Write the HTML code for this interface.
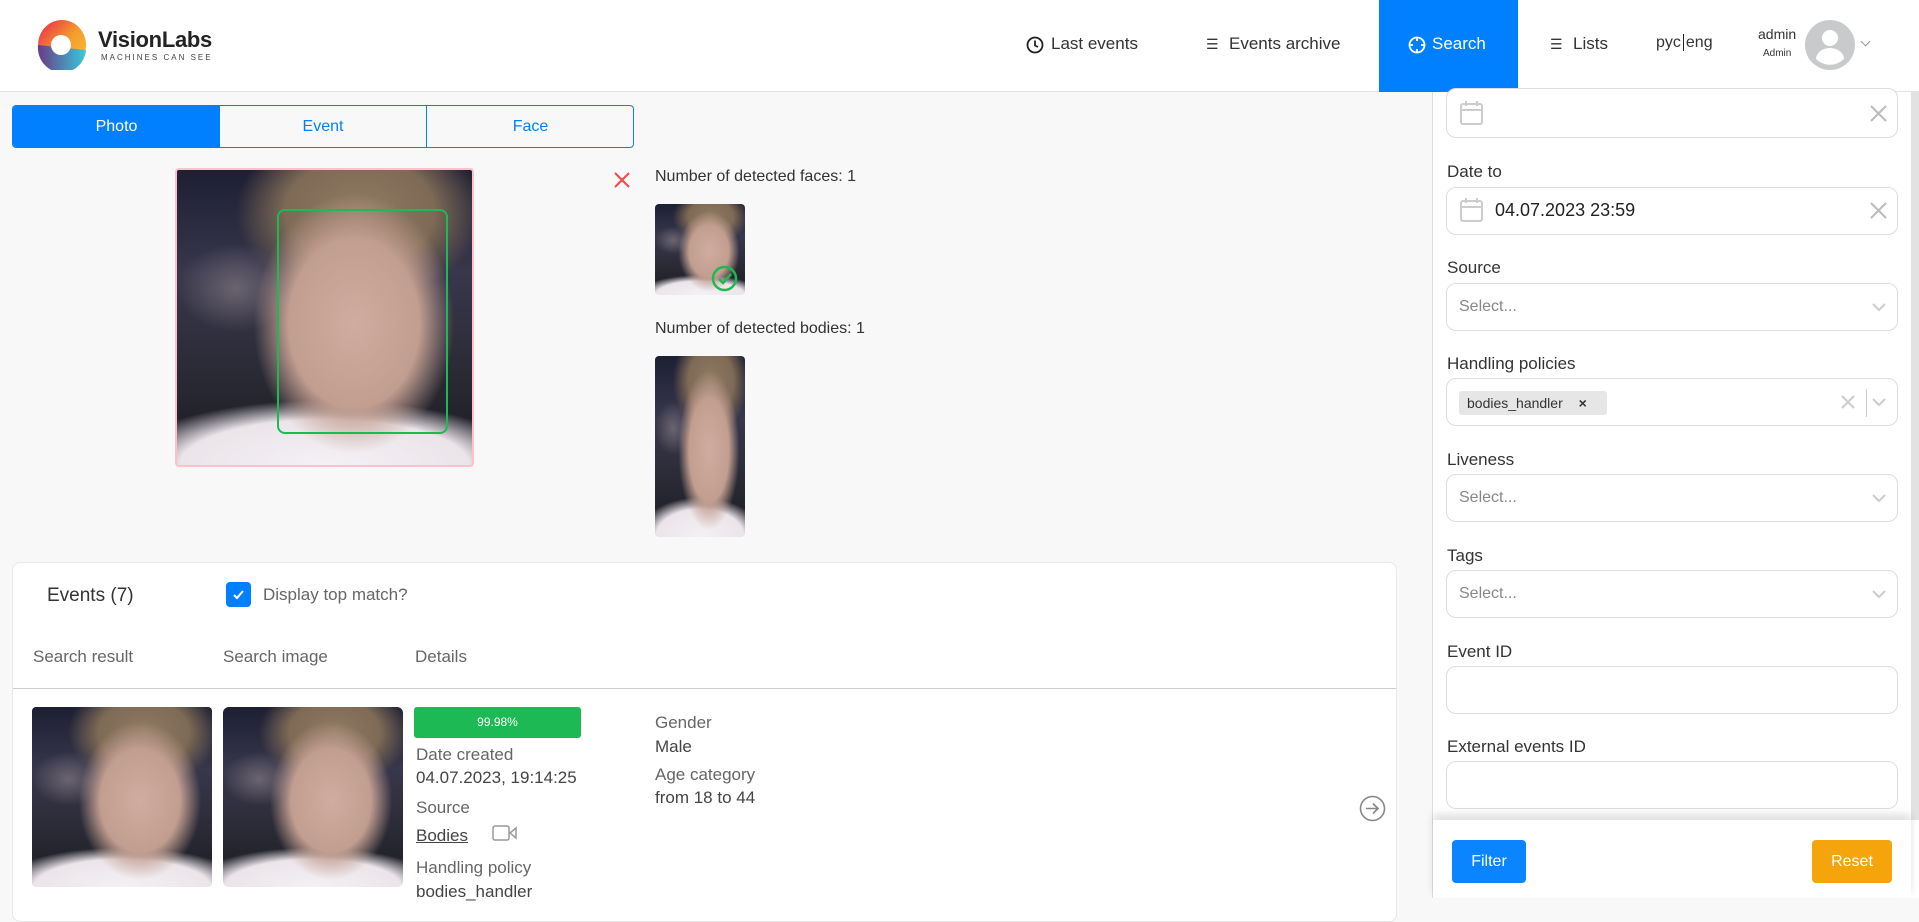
<!DOCTYPE html>
<html><head><meta charset="utf-8"><style>
*{box-sizing:border-box;margin:0;padding:0}
body{width:1919px;height:898px;overflow:hidden;background:#f8f8f8;font-family:"Liberation Sans",sans-serif;color:#333;position:relative}
.a{position:absolute}
.hdr{left:0;top:0;width:1919px;height:92px;background:#fff;border-bottom:1px solid #e3e3e3}
.nav{top:34px;font-size:17px;color:#333;white-space:nowrap}
.face{overflow:hidden;background:
radial-gradient(ellipse 34% 44% at 60% 52%,#cfac9f 0,#c29e90 65%,rgba(180,140,125,0) 100%),
radial-gradient(ellipse 42% 30% at 62% 14%,#8f7a63 0,#7e6a55 60%,rgba(0,0,0,0) 100%),
radial-gradient(ellipse 70% 22% at 50% 100%,#f4f0f4 0,#ebe5ea 70%,rgba(0,0,0,0) 100%),
radial-gradient(ellipse 20% 15% at 20% 40%,#6a6470 0,rgba(0,0,0,0) 100%),
linear-gradient(180deg,#1d1f33 0,#38374c 35%,#2a2a35 70%,#1a1a22 100%)}
.lbl{font-size:17px;color:#333;left:1447px}
.inp{left:1446px;width:452px;height:48px;border:1px solid #ddd;border-radius:10px;background:#fff}
.sel{font-size:16px;color:#888;position:absolute;left:12px;top:14px}
.chev{position:absolute;right:10px;top:15px}
.mut{font-size:17px;color:#666}
.val{font-size:17px;color:#444}
</style></head><body>
<div class="a hdr"></div>
<svg class="a" style="left:37px;top:20px" width="50" height="50" viewBox="0 0 50 50">
<defs><linearGradient id="g1" x1="0" y1="0" x2="1" y2="1"><stop offset="0" stop-color="#e8204f"/><stop offset=".5" stop-color="#f59a2d"/><stop offset="1" stop-color="#f9c62c"/></linearGradient>
<linearGradient id="g2" x1="0" y1="0" x2="1" y2="0"><stop offset="0" stop-color="#6a3b83"/><stop offset="1" stop-color="#3ac9dd"/></linearGradient></defs>
<ellipse cx="25" cy="25" rx="24" ry="25" fill="url(#g1)"/>
<path d="M1 25 A24 25 0 0 0 49 30 L30 28 Z" fill="url(#g2)"/>
<circle cx="24" cy="25" r="10" fill="#fff"/></svg>
<div class="a" style="left:98px;top:27px;font-size:22px;font-weight:bold;color:#222;letter-spacing:-.3px">VisionLabs</div>
<div class="a" style="left:101px;top:53px;font-size:8px;color:#444;letter-spacing:2px">MACHINES CAN SEE</div>
<svg class="a" style="left:1026px;top:36px" width="18" height="18" viewBox="0 0 18 18"><circle cx="9" cy="9" r="7.5" fill="none" stroke="#222" stroke-width="1.8"/><path d="M9 4.5V9.5L12 11" fill="none" stroke="#222" stroke-width="1.8"/></svg>
<div class="a nav" style="left:1051px">Last events</div>
<div class="a nav" style="left:1206px;font-size:14px;top:36px">☰</div>
<div class="a nav" style="left:1229px">Events archive</div>
<div class="a" style="left:1379px;top:0;width:139px;height:92px;background:#0080ff"></div>
<svg class="a" style="left:1408px;top:36px" width="18" height="18" viewBox="0 0 18 18"><circle cx="9" cy="9" r="7.5" fill="none" stroke="#fff" stroke-width="1.8"/><path d="M9 1v4M9 13v4M1 9h4M13 9h4" stroke="#fff" stroke-width="1.8"/></svg>
<div class="a nav" style="left:1432px;color:#fff">Search</div>
<div class="a nav" style="left:1550px;font-size:14px;top:36px">☰</div>
<div class="a nav" style="left:1573px">Lists</div>
<div class="a nav" style="left:1656px;font-size:16px">pyc<span style="border-left:1px solid #222;margin:0 2px"></span>eng</div>
<div class="a" style="left:1758px;top:26px;font-size:14px;color:#333">admin</div>
<div class="a" style="left:1763px;top:48px;font-size:10px;color:#333">Admin</div>
<svg class="a" style="left:1805px;top:20px" width="50" height="50" viewBox="0 0 50 50"><circle cx="25" cy="25" r="25" fill="#c9cacc"/><circle cx="25" cy="18" r="8" fill="#fff"/><path d="M11 39a14 11 0 0 1 28 0a20 20 0 0 1-28 0z" fill="#fff"/></svg>
<div class="a" style="left:1862px;top:38px;width:7px;height:7px;border-right:1px solid #999;border-bottom:1px solid #999;transform:rotate(45deg)"></div>

<div class="a" style="left:12px;top:105px;width:622px;height:43px;border:1px solid #0080ff;border-radius:4px;background:#f8f8f8;overflow:hidden;font-size:16px;color:#0080ff">
<div class="a" style="left:0;top:0;width:207px;height:41px;background:#0080ff;color:#fff;text-align:center;line-height:41px">Photo</div>
<div class="a" style="left:207px;top:0;width:207px;height:41px;border-right:1px solid #0080ff;text-align:center;line-height:41px">Event</div>
<div class="a" style="left:414px;top:0;width:207px;height:41px;text-align:center;line-height:41px">Face</div>
</div>
<div class="a face" style="left:175px;top:168px;width:299px;height:299px;border:2px solid #ffc0cb;border-radius:4px"></div>
<div class="a" style="left:277px;top:209px;width:171px;height:225px;border:2px solid #1db954;border-radius:8px"></div>
<svg class="a" style="left:613px;top:171px" width="18" height="18" viewBox="0 0 18 18"><path d="M2 2L16 16M16 2L2 16" stroke="#f44" stroke-width="2"/></svg>
<div class="a" style="left:655px;top:168px;font-size:16px;color:#333">Number of detected faces: 1</div>
<div class="a face" style="left:655px;top:204px;width:90px;height:91px;border-radius:4px"></div>
<svg class="a" style="left:711px;top:265px" width="27" height="27" viewBox="0 0 27 27"><circle cx="13.5" cy="13.5" r="11.5" fill="none" stroke="#1db954" stroke-width="2.5"/><path d="M8 14l4 4l8-9" fill="none" stroke="#1db954" stroke-width="2.5"/></svg>
<div class="a" style="left:655px;top:320px;font-size:16px;color:#333">Number of detected bodies: 1</div>
<div class="a face" style="left:655px;top:356px;width:90px;height:181px;border-radius:4px"></div>

<div class="a" style="left:12px;top:562px;width:1385px;height:360px;background:#fff;border:1px solid #e8e8e8;border-radius:8px"></div>
<div class="a" style="left:47px;top:585px;font-size:19px;color:#333">Events (7)</div>
<div class="a" style="left:226px;top:582px;width:25px;height:25px;background:#0080ff;border-radius:4px"></div>
<svg class="a" style="left:231px;top:588px" width="15" height="13" viewBox="0 0 15 13"><path d="M3 7l3 3l6-7" fill="none" stroke="#fff" stroke-width="2"/></svg>
<div class="a" style="left:263px;top:585px;font-size:17px;color:#666">Display top match?</div>
<div class="a mut" style="left:33px;top:647px">Search result</div>
<div class="a mut" style="left:223px;top:647px">Search image</div>
<div class="a mut" style="left:415px;top:647px">Details</div>
<div class="a" style="left:13px;top:688px;width:1383px;height:1px;background:#ccc"></div>
<div class="a face" style="left:32px;top:707px;width:180px;height:180px;border-radius:4px"></div>
<div class="a face" style="left:223px;top:707px;width:180px;height:180px;border-radius:6px"></div>
<div class="a" style="left:414px;top:707px;width:167px;height:31px;background:#1db954;border-radius:3px;color:#fff;font-size:12px;text-align:center;line-height:31px">99.98%</div>
<div class="a mut" style="left:416px;top:745px">Date created</div>
<div class="a val" style="left:416px;top:768px">04.07.2023, 19:14:25</div>
<div class="a mut" style="left:416px;top:798px">Source</div>
<div class="a val" style="left:416px;top:826px;text-decoration:underline">Bodies</div>
<svg class="a" style="left:492px;top:824px" width="26" height="18" viewBox="0 0 26 18"><rect x="1" y="2" width="16" height="14" rx="2" fill="none" stroke="#999" stroke-width="1.5"/><path d="M18 9l6-5v10z" fill="none" stroke="#999" stroke-width="1.5"/></svg>
<div class="a mut" style="left:416px;top:858px">Handling policy</div>
<div class="a val" style="left:416px;top:882px">bodies_handler</div>
<div class="a mut" style="left:655px;top:713px">Gender</div>
<div class="a val" style="left:655px;top:737px">Male</div>
<div class="a mut" style="left:655px;top:765px">Age category</div>
<div class="a val" style="left:655px;top:788px">from 18 to 44</div>
<svg class="a" style="left:1359px;top:795px" width="27" height="27" viewBox="0 0 27 27"><circle cx="13.5" cy="13.5" r="12" fill="none" stroke="#888" stroke-width="1.6"/><path d="M7 13.5h12M14 8.5l5 5l-5 5" fill="none" stroke="#888" stroke-width="1.6"/></svg>

<div class="a" style="left:1432px;top:92px;width:487px;height:806px;background:#fff;border-left:1px solid #ddd"></div>
<div class="a" style="left:1911px;top:92px;width:8px;height:728px;background:#e2e2e2"></div>
<div class="a inp" style="top:88px;height:50px">
<svg class="a" style="left:12px;top:10px" width="26" height="28" viewBox="0 0 26 28"><rect x="2" y="5" width="21" height="20" rx="2" fill="none" stroke="#ccc" stroke-width="2"/><path d="M2 11h21M7 2v5M18 2v5" stroke="#ccc" stroke-width="2"/></svg>
<svg class="a" style="left:423px;top:16px" width="17" height="17" viewBox="0 0 17 17"><path d="M1 1l15 15M16 1L1 16" stroke="#bbb" stroke-width="2"/></svg></div>
<div class="a lbl" style="top:162px">Date to</div>
<div class="a inp" style="top:187px">
<svg class="a" style="left:12px;top:8px" width="26" height="28" viewBox="0 0 26 28"><rect x="2" y="5" width="21" height="20" rx="2" fill="none" stroke="#ccc" stroke-width="2"/><path d="M2 11h21M7 2v5M18 2v5" stroke="#ccc" stroke-width="2"/></svg>
<div class="a" style="left:48px;top:12px;font-size:18px;color:#222">04.07.2023 23:59</div>
<svg class="a" style="left:423px;top:14px" width="17" height="17" viewBox="0 0 17 17"><path d="M1 1l15 15M16 1L1 16" stroke="#bbb" stroke-width="2"/></svg></div>
<div class="a lbl" style="top:258px">Source</div>
<div class="a inp" style="top:283px"><span class="sel">Select...</span><svg class="chev" width="16" height="16" viewBox="0 0 16 16"><path d="M2 5l6 6l6-6" fill="none" stroke="#ccc" stroke-width="2"/></svg></div>
<div class="a lbl" style="top:354px">Handling policies</div>
<div class="a inp" style="top:378px">
<div class="a" style="left:12px;top:12px;width:148px;height:24px;background:#e6e6e6;border-radius:3px;font-size:14px;color:#333;padding:4px 8px">bodies_handler <b style="margin-left:12px;font-size:14px">×</b></div>
<svg class="a" style="left:394px;top:16px" width="14" height="14" viewBox="0 0 14 14"><path d="M1 1l12 12M13 1L1 13" stroke="#ccc" stroke-width="2"/></svg>
<div class="a" style="left:419px;top:10px;width:1px;height:28px;background:#ccc"></div>
<svg class="chev" width="16" height="16" viewBox="0 0 16 16"><path d="M2 5l6 6l6-6" fill="none" stroke="#ccc" stroke-width="2"/></svg></div>
<div class="a lbl" style="top:450px">Liveness</div>
<div class="a inp" style="top:474px"><span class="sel">Select...</span><svg class="chev" width="16" height="16" viewBox="0 0 16 16"><path d="M2 5l6 6l6-6" fill="none" stroke="#ccc" stroke-width="2"/></svg></div>
<div class="a lbl" style="top:546px">Tags</div>
<div class="a inp" style="top:570px"><span class="sel">Select...</span><svg class="chev" width="16" height="16" viewBox="0 0 16 16"><path d="M2 5l6 6l6-6" fill="none" stroke="#ccc" stroke-width="2"/></svg></div>
<div class="a lbl" style="top:642px">Event ID</div>
<div class="a inp" style="top:666px"></div>
<div class="a lbl" style="top:737px">External events ID</div>
<div class="a inp" style="top:761px"></div>
<div class="a" style="left:1433px;top:820px;width:478px;height:78px;background:#fff;box-shadow:0 -6px 8px rgba(0,0,0,.12)"></div>
<div class="a" style="left:1452px;top:840px;width:74px;height:43px;background:#0a84ff;border-radius:4px;color:#fff;font-size:16px;text-align:center;line-height:43px">Filter</div>
<div class="a" style="left:1812px;top:840px;width:80px;height:43px;background:#f5a50b;border-radius:4px;color:#fff;font-size:16px;text-align:center;line-height:43px">Reset</div>
</body></html>
